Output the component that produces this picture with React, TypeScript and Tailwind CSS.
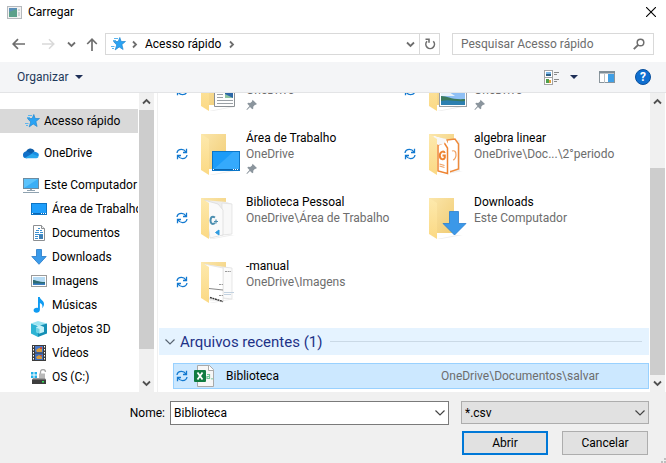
import React, { useState } from "react";

type SvgProps = { className?: string };

function StarIcon() {
  return (
    <svg width="16" height="16" viewBox="0 0 16 16" aria-hidden="true">
      <path d="M9.800 1.500 11.200 5.500h4.300l-3.600 3 1.200 5-3.900-2.500-4 2.900 1.500-5L3.500 5.500H8.200z" fill="#2aa3f4" stroke="#2388d0" strokeWidth="0.700" />
      <path d="M4 2.500h4M3 4.500h3M1 10.500h3.500M2 12.500h2" stroke="#5bb5ee" strokeWidth="1" />
    </svg>
  );
}

function CloudIcon() {
  return (
    <svg width="16" height="16" viewBox="0 0 16 16" aria-hidden="true">
      <path d="M3 7.200A4.600 4.600 0 0 1 11.600 6L9 10z" fill="#0f5ea8" />
      <path d="M0 10a3.400 3.400 0 0 1 5-3.200l5 3L4 13.200H3.200A3.200 3.200 0 0 1 0 10z" fill="#1170c8" />
      <path d="M8 9.500a4 4 0 0 1 6-2 3.200 3.200 0 0 1 2 3l-3 1.500z" fill="#1a8fe3" />
      <path d="M2 12.800l7-4 6.800 2.800a2.600 2.600 0 0 1-2.500 1.700H3.500a3 3 0 0 1-1.500-.5z" fill="#2aa8ee" />
    </svg>
  );
}

function ComputerIcon() {
  return (
    <svg width="16" height="16" viewBox="0 0 16 16" aria-hidden="true">
      <rect x="0.500" y="1.500" width="15" height="10" fill="#5cc3fb" stroke="#6d8ba0" />
      <path d="M1 11 15 2v9z" fill="#3aaef5" />
      <path d="M8 12v2" stroke="#9aa8b2" strokeWidth="2" />
      <path d="M4 13.500h8M0 15.500h16" stroke="#8fa2b0" />
    </svg>
  );
}

function DesktopIcon() {
  return (
    <svg width="16" height="16" viewBox="0 0 16 16" aria-hidden="true">
      <rect x="0.500" y="2.500" width="15" height="11" fill="#1e9efb" stroke="#0d74c4" />
      <path d="M1 12.500h14" stroke="#0a66b4" />
      <path d="M1 12.500h1M10 12.500h1M12 12.500h1M14 12.500h1" stroke="#fff" />
    </svg>
  );
}

function DocumentIcon() {
  return (
    <svg width="16" height="16" viewBox="0 0 16 16" aria-hidden="true">
      <path d="M2.500.5h8l3 3v12h-11z" fill="#fff" stroke="#8c8f92" />
      <path d="M10.500.5v3h3" fill="#eee" stroke="#8c8f92" />
      <path d="M7 3.500h2M5 5.500h3M9 5.500h2M4 7.500h4M9 7.500h3M4 9.500h8M4 11.500h3M4 13.500h3" stroke="#3b8fd0" />
      <rect x="8" y="10" width="4" height="4" fill="#3f7fb5" />
    </svg>
  );
}

function DownloadArrow() {
  return (
    <svg width="16" height="16" viewBox="0 0 16 16" aria-hidden="true">
      <path d="M5.500.5h5v7h4.700L8 15.300.8 7.500h4.700z" fill="#3b9bea" stroke="#2478c8" strokeWidth="0.800" />
    </svg>
  );
}

function PictureIcon() {
  return (
    <svg width="16" height="16" viewBox="0 0 16 16" aria-hidden="true">
      <rect x="0.500" y="2.500" width="15" height="11" fill="#fff" stroke="#9b9b9b" />
      <rect x="2" y="4" width="12" height="8" fill="#b7dcf5" />
      <path d="M2 7c3 0 5 2 12 2v3H2z" fill="#2e6b73" />
      <path d="M2 10.500h12V12H2z" fill="#3a7fc4" />
    </svg>
  );
}

function MusicIcon() {
  return (
    <svg width="16" height="16" viewBox="0 0 16 16" aria-hidden="true">
      <path d="M7 0h1.800c.3 2.500 4.200 3.500 4.200 7 0 1.800-.7 3-1.800 4.200.8-3-.3-4.400-2.300-5.100v6.600c0 1.800-1.500 3-3.400 3S2.600 14.800 2.600 13.300c0-1.700 2-2.900 4.400-2.300z" fill="#0f9bf2" />
    </svg>
  );
}

function CubeIcon() {
  return (
    <svg width="16" height="16" viewBox="0 0 16 16" aria-hidden="true">
      <path d="M0 2.500 7 0l9 2.500L9 5z" fill="#9be4f1" />
      <path d="M0 2.500 7 5v11l-7-3.500z" fill="#2db4d4" />
      <path d="M7 5l9-2.500v10L7 16z" fill="#148fb5" />
      <path d="M5 6.500 8.500 4 13 6v5l-4.500 1.500L5 11z" fill="#c5f1f8" />
      <path d="M8.500 8v4.500L5 11V6.500z" fill="#6fd3e6" />
    </svg>
  );
}

function VideoIcon() {
  return (
    <svg width="16" height="16" viewBox="0 0 16 16" aria-hidden="true">
      <rect x="1" y="0" width="14" height="16" fill="#3c3c3c" />
      <rect x="4" y="1" width="8" height="6.500" fill="#4a78c8" />
      <rect x="4" y="8.500" width="8" height="6.500" fill="#3e6fc0" />
      <path d="M5 5l3-2 3 1v3H6zM5 12l3-2 3 2v2H6z" fill="#d79b3c" />
      <path d="M9 2h2v2H9zM9 10h2v1H9z" fill="#c84c38" />
      <path d="M2.500 1v15M13.500 1v15" stroke="#fff" strokeDasharray="1.500 1.500" />
    </svg>
  );
}

function DriveIcon() {
  return (
    <svg width="16" height="16" viewBox="0 0 16 16" aria-hidden="true">
      <path d="M0 3h2.500v2.500H0zM3.500 3H6v2.500H3.500zM0 6.500h2.500V9H0zM3.500 6.500H6V9H3.500z" fill="#1fb0ea" />
      <path d="M9.500 5V3a2.500 2.500 0 0 1 5 0" fill="none" stroke="#a8a8a8" strokeWidth="1.300" />
      <rect x="8" y="4.500" width="6" height="4.500" fill="#b9b9b9" />
      <path d="M2 9h12l1 2H1z" fill="#9a9a9a" />
      <rect x="1" y="10.500" width="14" height="4.500" fill="#3d3d3d" />
      <rect x="11" y="12" width="2" height="1.500" fill="#36e05a" />
    </svg>
  );
}

function SyncIcon() {
  return (
    <svg width="12" height="12" viewBox="0 0 12 12" fill="none" stroke="#1279d0" strokeWidth="1.300" aria-hidden="true">
      <path d="M1 5C1.300 2.800 3.200 1.400 5.500 1.400c1.800 0 3.300.8 4.500 2.600M10.500.8v3.700H7" />
      <path d="M11 7c-.3 2.200-2.200 3.600-4.500 3.600C4.700 10.600 3.200 9.800 2 8M1.500 11.200V7.500H5" />
    </svg>
  );
}

function PinIcon() {
  return (
    <svg width="12" height="12" viewBox="0 0 12 12" aria-hidden="true">
      <path d="M6.500.8 11 5l-1.200.8-1 .1-1.600 1.900.1 1.700-1 .8-2.300-2.400L1 11l-.6-.5L3.500 7 1.300 4.800l.9-1 2 .1L6 2.400z" fill="#8b959d" />
    </svg>
  );
}

function Chevron({ dir, className = "" }: SvgProps & { dir: "up" | "down" | "right" }) {
  const d = { up: "M1 6.500 4.500 3 8 6.500", down: "M1 2.500 4.500 6 8 2.500", right: "M3 1.500 6 4.500 3 7.500" }[dir];
  return (
    <svg width="9" height="9" viewBox="0 0 9 9" fill="none" stroke="currentColor" strokeWidth="1.800" className={className} aria-hidden="true">
      <path d={d} />
    </svg>
  );
}

function ThinChevron({ className = "" }: SvgProps) {
  return (
    <svg width="12" height="8" viewBox="0 0 12 8" fill="none" stroke="currentColor" strokeWidth="1.200" className={className} aria-hidden="true">
      <path d="M1.500 1.500 6 6l4.500-4.500" />
    </svg>
  );
}

function Caret() {
  return (
    <svg width="8" height="4" viewBox="0 0 8 4" aria-hidden="true">
      <path d="M0 0h8L4 4z" fill="#1e2f57" />
    </svg>
  );
}

type FolderKind = "document" | "picture" | "desktop" | "pdf" | "code" | "download" | "manual";

function FolderIcon({ kind }: { kind: FolderKind }) {
  return (
    <svg width="40" height="44" viewBox="0 0 40 44" aria-hidden="true">
      <defs>
        <linearGradient id={`back-${kind}`} x1="0" y1="0" x2="1" y2="1">
          <stop offset="0" stopColor="#fbe6ab" />
          <stop offset="1" stopColor="#f1cc74" />
        </linearGradient>
        <linearGradient id={`flap-${kind}`} x1="0" y1="0" x2="0" y2="1">
          <stop offset="0" stopColor="#fde9ad" />
          <stop offset="1" stopColor="#fbd984" />
        </linearGradient>
      </defs>
      <path d="M8 42l20-4 6 0-22 4z" fill="#eeeeee" />
      <path d="M0 1h25v35H0z" fill={`url(#back-${kind})`} />
      {kind === "pdf" && (
        <g>
          <path d="M3 3l20 4 8 0v31l-23 4z" fill="#f1f1f1" />
          <path d="M18 7l8-1 3.500 5v25l-9 3z" fill="#fff" stroke="#ee8b3c" strokeWidth="1.500" />
          <path d="M5 3l12 4 4 7v27l-13 1z" fill="#fff" />
          <path d="M9 12v26l9.500 2.500V15L15 9.500z" fill="#fff" stroke="#ee8432" strokeWidth="1.500" />
          <path d="M5 3l12 4-2 4-6 1z" fill="#f7f7f7" />
          <path d="M15.800 20c-1-2.500-5-1.500-5 2.500s4 5 5 2.200v-2.200h-2.300" fill="none" stroke="#ee8432" strokeWidth="2" />
          <path d="M10.500 31l5 1.500M10.500 33l5 1.500M23 18c3-1 4 1 4 4s-2 5-3 5" fill="none" stroke="#f0a365" strokeWidth="1.200" />
        </g>
      )}
      {kind === "code" && (
        <g>
          <path d="M2 3l24 2 5 2v30l-22 3z" fill="#ededed" />
          <path d="M21 6l10 1v30l-10 1z" fill="#f8f8f8" stroke="#dedede" strokeWidth="0.700" />
          <path d="M3 3l14 4 5 6v25l-13 3z" fill="#fafafa" stroke="#d9d9d9" strokeWidth="0.700" />
          <path d="M14 20.500c-3-2-4.500 0-4.500 3s2 4.500 4.500 2.500" fill="none" stroke="#4d8fb0" strokeWidth="2" />
          <path d="M13 24.500h4M15 22.500v4" stroke="#4d8fb0" strokeWidth="1.200" />
          <path d="M18 33l-3.500 2.500 3.500 2.500z" fill="#2f9be0" stroke="#2f9be0" />
        </g>
      )}
      {kind === "manual" && (
        <g>
          <path d="M2 3l22 3 7 1v30l-22 3z" fill="#f1f1f1" />
          <path d="M22 6l9 1v31l-9-1z" fill="#fbfbfb" stroke="#dcdcdc" strokeWidth="0.700" />
          <path d="M3 3l19 4v34L8 38z" fill="#fff" stroke="#e0e0e0" strokeWidth="0.700" />
          <path d="M8 27.500l14 1.500" stroke="#888" />
          <path d="M9 36.500l13 4" stroke="#333" strokeWidth="1.400" strokeDasharray="2 .6" />
          <path d="M18 23.500h4M18 34.500h4M24 10.500h6" stroke="#9a9a9a" strokeWidth="1.200" strokeDasharray="2 .6" />
          <path d="M23 31.500h10M23 33.500h7" stroke="#c3d2e0" />
        </g>
      )}
      <path d="M0 1l8 5v36l-8-5z" fill={`url(#flap-${kind})`} />
      {kind === "desktop" && (
        <g>
          <rect x="11.500" y="18.500" width="27" height="19" fill="#1c9cf8" stroke="#0b76c8" />
          <path d="M12 37 32 19h6v18z" fill="#35aafc" />
          <path d="M12 36.500h26" stroke="#0b66b0" />
          <path d="M12 36.500h1M32 36.500h1M34 36.500h1M36 36.500h1" stroke="#fff" />
        </g>
      )}
      {kind === "document" && (
        <g>
          <path d="M13.500 8.500h20v29h-20z" fill="#fdfdfd" stroke="#8a8f93" />
          <path d="M16 25.500h6M16 28.500h6M16 31.500h16M16 34.500h16" stroke="#9aa0a5" />
          <rect x="24" y="22" width="8" height="7" fill="#2c67a8" />
          <path d="M24 25l8 4h-8z" fill="#8ec3a0" />
        </g>
      )}
      {kind === "picture" && (
        <g>
          <rect x="10.500" y="14.500" width="27" height="23" fill="#fff" stroke="#9a9fa3" />
          <rect x="12" y="16" width="24" height="20" fill="#8fc0f5" />
          <path d="M12 22l8 1 6 4H12z" fill="#e8f2fb" />
          <path d="M12 27c7 0 10 4 24 3v4H12z" fill="#3b7a5e" />
          <path d="M12 32c8-2 15 1 24 0v4H12z" fill="#2c7fb0" />
        </g>
      )}
      {kind === "download" && (
        <path d="M20.500 14.500h9v12h7.500L25.500 38 14 26.500h6.500z" fill="#3b98e8" stroke="#2a7fd0" strokeWidth="0.800" />
      )}
    </svg>
  );
}

function CsvIcon() {
  return (
    <svg width="22" height="24" viewBox="0 0 22 24" aria-hidden="true">
      <path d="M3.500 1.500h12l4 4v17h-16z" fill="#f7f7f7" stroke="#a9a9a9" />
      <path d="M14.500 1.500v5h5" fill="#fff" stroke="#a9a9a9" />
      <rect x="0" y="6" width="12" height="12" rx="1" fill="#107c41" />
      <path d="M3.500 8.500l5 7M8.500 8.500l-5 7" stroke="#fff" strokeWidth="1.800" />
      <path d="M13 10.500h2.500v4H13v-2h2.500M18 14v1.500" fill="none" stroke="#6fc596" strokeWidth="1.200" />
    </svg>
  );
}

function ScrollBar({ thumb, track }: { thumb: string; track: string }) {
  return (
    <div className="flex w-[15px] shrink-0 flex-col bg-[#f0f0f0] text-[#505050]" aria-hidden="true">
      <div className="flex h-[17px] items-center justify-center"><Chevron dir="up" /></div>
      <div className={`flex grow flex-col ${track}`}>
        <div className={`w-full bg-[#cdcdcd] ${thumb}`} />
      </div>
      <div className="flex h-[17px] items-center justify-center"><Chevron dir="down" /></div>
    </div>
  );
}

const places = [
  { label: "Área de Trabalho", icon: <DesktopIcon /> },
  { label: "Documentos", icon: <DocumentIcon /> },
  { label: "Downloads", icon: <DownloadArrow /> },
  { label: "Imagens", icon: <PictureIcon /> },
  { label: "Músicas", icon: <MusicIcon /> },
  { label: "Objetos 3D", icon: <CubeIcon /> },
  { label: "Vídeos", icon: <VideoIcon /> },
  { label: "OS (C:)", icon: <DriveIcon /> },
];

const folders: { name: string; path: string; kind: FolderKind; sync: boolean; pinned: boolean }[] = [
  { name: "", path: "OneDrive", kind: "document", sync: true, pinned: true },
  { name: "", path: "OneDrive", kind: "picture", sync: true, pinned: true },
  { name: "Área de Trabalho", path: "OneDrive", kind: "desktop", sync: true, pinned: true },
  { name: "algebra linear", path: "OneDrive\\Doc...\\2°periodo", kind: "pdf", sync: true, pinned: false },
  { name: "Biblioteca Pessoal", path: "OneDrive\\Área de Trabalho", kind: "code", sync: true, pinned: false },
  { name: "Downloads", path: "Este Computador", kind: "download", sync: false, pinned: false },
  { name: "-manual", path: "OneDrive\\Imagens", kind: "manual", sync: true, pinned: false },
];

export default function App() {
  const [fileName, setFileName] = useState("Biblioteca");

  return (
    <div className="w-full overflow-hidden bg-white font-['Roboto','Open_Sans',sans-serif] text-[12px] leading-4 text-black">
      <header className="flex h-6 items-center pl-[7px] pr-2.5">
        <svg width="15" height="13" viewBox="0 0 15 13" aria-hidden="true">
          <rect x="0.500" y="0.500" width="14" height="12" fill="#f2f2f2" stroke="#b5b9bd" />
          <rect x="2" y="2" width="8" height="9" fill="#5b8fb9" />
          <path d="M2 6l8-3v8H2z" fill="#5ba08a" />
          <path d="M11 3h2v2h-2zM11 6h2v4h-2z" fill="#cfd4d8" />
        </svg>
        <h1 className="ml-1.5 grow">Carregar</h1>
        <button type="button" aria-label="Fechar">
          <svg width="10" height="10" viewBox="0 0 10 10" stroke="#000" strokeWidth="1.100" aria-hidden="true">
            <path d="M0 0l10 10M10 0 0 10" />
          </svg>
        </button>
      </header>

      <nav className="flex items-center px-3 pb-[7px] pt-[9px] text-[#6e6e6e]">
        <div className="flex w-[93px] shrink-0 items-center">
          <button type="button" aria-label="Voltar">
            <svg width="13" height="12" viewBox="0 0 13 12" fill="none" stroke="#6e6e6e" strokeWidth="1.700" aria-hidden="true"><path d="M13 6H1.500M6 1.200 1.200 6 6 10.800" /></svg>
          </button>
          <button type="button" aria-label="Avançar" className="ml-[17px]">
            <svg width="13" height="12" viewBox="0 0 13 12" fill="none" stroke="#d9d9d9" strokeWidth="1.500" aria-hidden="true"><path d="M0 6h11.500M7 1.200 11.800 6 7 10.800" /></svg>
          </button>
          <button type="button" aria-label="Locais recentes" className="ml-3"><Chevron dir="down" /></button>
          <button type="button" aria-label="Acima" className="ml-2.5">
            <svg width="12" height="13" viewBox="0 0 12 13" fill="none" stroke="#6e6e6e" strokeWidth="1.700" aria-hidden="true"><path d="M6 13V1.500M1.200 6 6 1.200 10.800 6" /></svg>
          </button>
        </div>
        <div className="flex h-[22px] min-w-0 grow items-center border border-[#d9d9d9]">
          <span className="ml-1"><StarIcon /></span>
          <Chevron dir="right" className="ml-1" />
          <button type="button" className="ml-1.5 whitespace-nowrap text-black">Acesso rápido</button>
          <Chevron dir="right" className="ml-1.5 mr-auto" />
          <button type="button" aria-label="Locais anteriores" className="mr-1"><Chevron dir="down" /></button>
          <button type="button" aria-label="Atualizar" className="flex h-full w-5 items-center justify-center border-l border-[#d9d9d9]">
            <svg width="12" height="12" viewBox="0 0 12 12" fill="none" stroke="#6e6e6e" strokeWidth="1.600" aria-hidden="true"><path d="M9.300 3.300A4.300 4.300 0 1 1 3 3.300M1.500 1.300H5v3.500" /></svg>
          </button>
        </div>
        <label className="ml-3 flex h-[22px] w-[202px] shrink-0 items-center border border-[#d9d9d9] px-2">
          <input type="text" aria-label="Pesquisar" placeholder="Pesquisar Acesso rápido" className="min-w-0 grow outline-none placeholder:text-[#6d6d6d]" />
          <svg width="12" height="12" viewBox="0 0 12 12" fill="none" stroke="#6e6e6e" strokeWidth="1.500" aria-hidden="true"><circle cx="7.500" cy="4.500" r="3.300" /><path d="M5.200 6.800.8 11.200" strokeWidth="1.900" /></svg>
        </label>
      </nav>

      <div className="flex h-[31px] items-center border-b border-[#e3e4e6] bg-[#f4f5f7] pl-[17px] pr-[15px] text-[#1e395b]">
        <button type="button" className="flex items-center gap-1.5">Organizar<Caret /></button>
        <button type="button" aria-label="Alterar modo de exibição" className="ml-auto flex items-center gap-2.5">
          <svg width="16" height="15" viewBox="0 0 16 15" aria-hidden="true">
            <rect x="0.500" y="0.500" width="8" height="14" fill="#fff" stroke="#a3a3a3" />
            <path d="M1 7.500h7" stroke="#a3a3a3" />
            <rect x="2" y="2" width="5" height="4" fill="#7db7e8" />
            <path d="M2 4h5v2H2z" fill="#2d5f86" />
            <rect x="2" y="9" width="3" height="4" fill="#4fa04c" />
            <rect x="5" y="10" width="2" height="3" fill="#e2a03c" />
            <path d="M10 2.500h5M10 4.500h3M10 9.500h5M10 11.500h3" stroke="#8a8a8a" />
          </svg>
          <Caret />
        </button>
        <button type="button" aria-label="Mostrar o painel de visualização" className="ml-[21px]">
          <svg width="16" height="12" viewBox="0 0 16 12" aria-hidden="true">
            <rect x="0.500" y="0.500" width="15" height="11" fill="#fff" stroke="#8a959c" />
            <path d="M0 1.500h16" stroke="#7d8b95" strokeWidth="2" />
            <path d="M5.500 3v9" stroke="#b9c1c6" />
            <rect x="9" y="3" width="6" height="8" fill="#3f9fe6" />
          </svg>
        </button>
        <button type="button" aria-label="Ajuda" className="ml-5 flex size-4 items-center justify-center rounded-full border border-[#0a4f9c] bg-[#0f6fd0] text-[12px] font-bold leading-3 text-white">?</button>
      </div>

      <div className="flex">
        <aside className="flex w-[154px] shrink-0">
          <ul className="flex min-w-0 grow flex-col overflow-hidden whitespace-nowrap pb-[3px] pt-4">
            <li className="mb-2 mr-px flex h-6 items-center gap-1 bg-[#d9d9d9] pl-6"><span className="shrink-0"><StarIcon /></span>Acesso rápido</li>
            <li className="mb-2 flex h-6 items-center gap-[5px] pl-[23px]"><span className="shrink-0"><CloudIcon /></span>OneDrive</li>
            <li className="flex h-6 items-center gap-[5px] pl-[23px]"><span className="shrink-0"><ComputerIcon /></span>Este Computador</li>
            {places.map((p) => (
              <li key={p.label} className="mr-px flex h-6 items-center gap-[5px] overflow-hidden pl-[31px]">
                <span className="shrink-0">{p.icon}</span>
                {p.label}
              </li>
            ))}
          </ul>
          <ScrollBar track="" thumb="basis-[90%]" />
        </aside>

        <main className="ml-[3px] flex min-w-0 grow overflow-hidden border-l border-[#f0f0f0]">
          <div className="min-w-0 grow pl-px pr-px">
            <div className="overflow-hidden">
              <ul className="-mt-[27px] grid grid-cols-[repeat(auto-fill,228px)] pl-[17px]">
                {folders.map((f) => (
                  <li key={f.kind} className="flex h-16">
                    <span className="mt-[18px] w-[25px] shrink-0">{f.sync && <SyncIcon />}</span>
                    <span className="mt-[3px] w-[45px] shrink-0"><FolderIcon kind={f.kind} /></span>
                    <span className="flex min-w-0 flex-col whitespace-nowrap">
                      <span className="h-4">{f.name}</span>
                      <span className="text-[#6d6d6d]">{f.path}</span>
                      {f.pinned && <span className="mt-px"><PinIcon /></span>}
                    </span>
                  </li>
                ))}
              </ul>
            </div>
            <h2 className="mt-1.5 flex h-[27px] items-center bg-[#e5f3ff] pl-[5px] pr-[7px] text-[15px] leading-5 text-[#1e3287]">
              <ThinChevron className="mr-1 shrink-0 text-[#5a6573]" />
              <span className="whitespace-nowrap">Arquivos recentes (1)</span>
              <span className="ml-2 h-px grow bg-[#cad9e6]" />
            </h2>
            <div className="mb-[3px] ml-3.5 mt-2 flex h-[26px] items-center border border-[#99d1ff] bg-[#cce8ff] pl-0.5">
              <SyncIcon />
              <span className="ml-1.5 mr-2.5"><CsvIcon /></span>
              <span className="w-[215px]">Biblioteca</span>
              <span className="text-[#6d6d6d]">OneDrive\Documentos\salvar</span>
            </div>
          </div>
          <ScrollBar track="justify-end" thumb="basis-[78%]" />
          <div className="w-px shrink-0" />
        </main>
      </div>

      <footer className="flex flex-col bg-[#f0f0f0] pl-3 pt-[9px]">
        <div className="flex items-start pr-[17px]">
          <label htmlFor="file-name" className="w-[158px] shrink-0 pr-[5px] pt-1 text-right">Nome:</label>
          <div className="flex h-6 min-w-0 grow items-center border border-[#7a7a7a] bg-white">
            <input id="file-name" type="text" value={fileName} onChange={(e) => setFileName(e.target.value)} className="h-full min-w-0 grow pl-[3px] outline-none" />
            <button type="button" aria-label="Nomes anteriores" className="mr-0.5 text-[#444]"><ThinChevron /></button>
          </div>
          <div className="relative ml-3 w-[188px] shrink-0">
            <select aria-label="Tipo de arquivo" className="h-[23px] w-full appearance-none border border-[#adadad] bg-[#e1e1e1] pl-[3px] outline-none">
              <option>*.csv</option>
            </select>
            <ThinChevron className="pointer-events-none absolute right-[3px] top-2 text-[#444]" />
          </div>
        </div>
        <div className="flex items-start justify-end pr-[18px] pt-1.5">
          <button type="button" className="mr-3.5 h-6 w-[86px] border-2 border-[#0078d7] bg-[#e1e1e1]">Abrir</button>
          <button type="button" className="h-6 w-[86px] border border-[#adadad] bg-[#e1e1e1]">Cancelar</button>
        </div>
        <svg width="8" height="8" viewBox="0 0 8 8" className="ml-auto" aria-hidden="true">
          <path d="M3 6h2v2H3zM6 6h2v2H6zM6 3h2v2H6z" fill="#bfbfbf" />
        </svg>
      </footer>
    </div>
  );
}
